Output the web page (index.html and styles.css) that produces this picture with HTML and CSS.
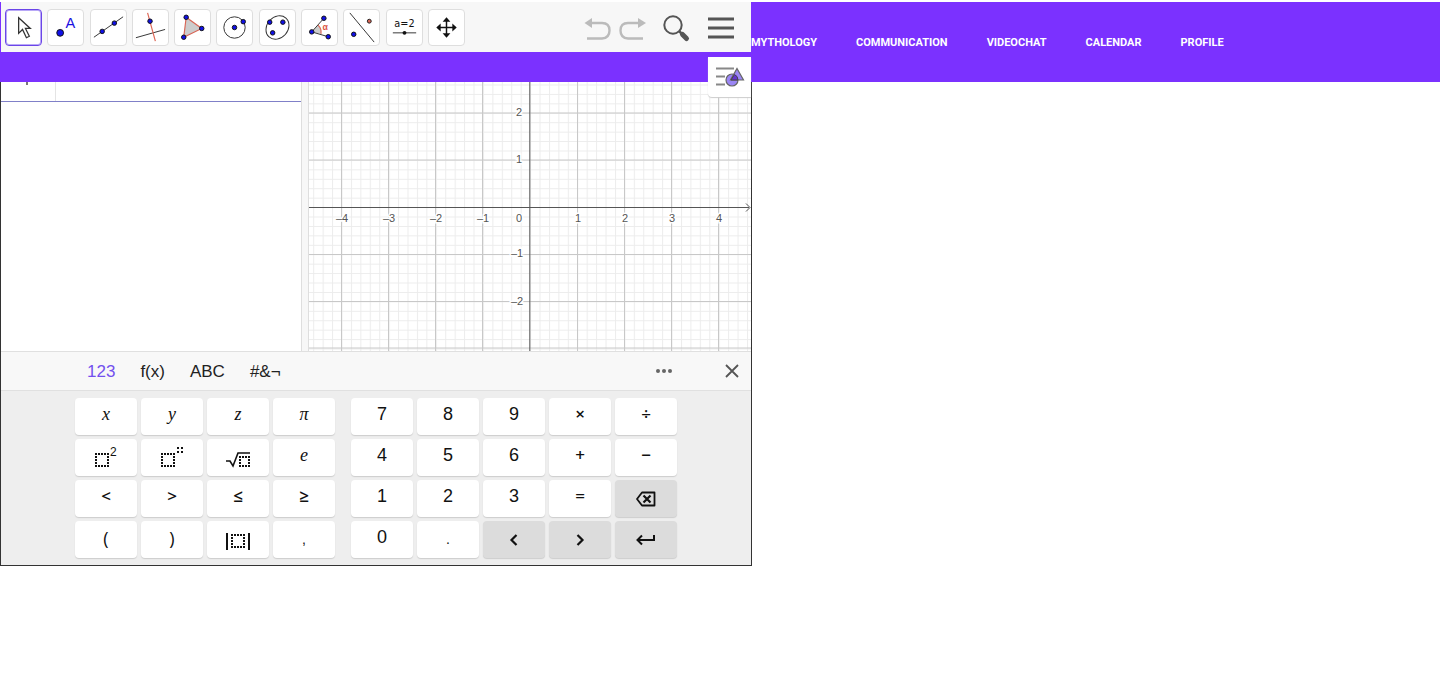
FILE: index.html
```html
<!DOCTYPE html>
<html lang="en">
<head>
<meta charset="utf-8">
<title>Geometry</title>
<link rel="stylesheet" href="styles.css">
</head>
<body>
<div class="page">
  <header class="site-header">
    <nav class="site-nav" aria-label="Main">
      <a href="#mythology">MYTHOLOGY</a>
      <a href="#communication">COMMUNICATION</a>
      <a href="#videochat">VIDEOCHAT</a>
      <a href="#calendar">CALENDAR</a>
      <a href="#profile">PROFILE</a>
    </nav>
  </header>

  <div class="toolbar">
    <div class="tools">
      <button class="tool selected" aria-label="Move"><svg viewBox="0 0 36 36"><path d="M13 8v16l4-4 4 8.500 3-1.500-4-8h5z" fill="#fff" stroke="#333" stroke-width="1.300"/></svg></button>
      <button class="tool" aria-label="Point"><svg viewBox="0 0 36 36"><circle cx="12.500" cy="23.500" r="3.500" class="pt"/><text x="18" y="18" class="letter">A</text></svg></button>
      <button class="tool" aria-label="Line"><svg viewBox="0 0 36 36"><path d="M3 28 33 7" class="ln"/><circle cx="11.500" cy="22" r="2.300" class="pt"/><circle cx="24" cy="13.500" r="2.300" class="pt"/></svg></button>
      <button class="tool" aria-label="Perpendicular line"><svg viewBox="0 0 36 36"><path d="M3 28.500 33 20" class="ln"/><path d="M15 3l8 29" class="red"/><circle cx="17.500" cy="11.500" r="2.300" class="pt"/></svg></button>
      <button class="tool" aria-label="Polygon"><svg viewBox="0 0 36 36"><path d="M11.500 7.500 27.500 19 9 28z" fill="#ccc" stroke="#d86555" stroke-width="1.200"/><circle cx="11.500" cy="7.500" r="2.300" class="pt"/><circle cx="27.500" cy="19" r="2.300" class="pt"/><circle cx="9" cy="28" r="2.300" class="pt"/></svg></button>
      <button class="tool" aria-label="Circle"><svg viewBox="0 0 36 36"><circle cx="18" cy="18" r="11" class="ln"/><circle cx="18" cy="18" r="2.300" class="pt"/><circle cx="27" cy="12" r="2.300" class="pt"/></svg></button>
      <button class="tool" aria-label="Ellipse"><svg viewBox="0 0 36 36"><ellipse cx="18" cy="18" rx="13" ry="10.800" transform="rotate(-48 18 18)" class="ln"/><circle cx="10" cy="12.500" r="2.300" class="pt"/><circle cx="23.500" cy="12.500" r="2.300" class="pt"/><circle cx="13" cy="23.500" r="2.300" class="pt"/></svg></button>
      <button class="tool" aria-label="Angle"><svg viewBox="0 0 36 36"><path d="M10 22.500l6.500-7a10 10 0 0 1 3 9z" fill="#ccc"/><path d="M16.500 15.500a10 10 0 0 1 3 9" class="red"/><path d="M22.500 8.500 10 22.500l17 5" class="ln"/><circle cx="22.500" cy="8.500" r="2.300" class="pt"/><circle cx="10" cy="22.500" r="2.300" class="pt"/><circle cx="27" cy="27.500" r="2.300" class="pt"/><text x="21" y="21" class="alpha">α</text></svg></button>
      <button class="tool" aria-label="Reflect about line"><svg viewBox="0 0 36 36"><path d="M6 3l25 30" class="ln"/><circle cx="10" cy="25" r="2.300" class="pt"/><circle cx="26" cy="11.500" r="2" fill="#d86555" stroke="#222"/></svg></button>
      <button class="tool" aria-label="Slider"><svg viewBox="0 0 36 36"><text x="18" y="17" text-anchor="middle" class="slider-label">a=2</text><path d="M6 23.500h24" class="ln"/><circle cx="18" cy="23.500" r="2" fill="#111"/></svg></button>
      <button class="tool" aria-label="Move graphics view"><svg viewBox="0 0 36 36"><path d="M18 10v16M10 18h16" stroke="#111" stroke-width="1.500"/><path d="M18 7.500l-4 4.500h8zM18 28.500l-4-4.500h8zM7.500 18l4.500-4v8zM28.500 18l-4.500-4v8z" fill="#111"/></svg></button>
    </div>
    <div class="actions">
      <button class="action" aria-label="Undo"><svg width="28" height="36" viewBox="0 0 28 36"><path d="M5 14h14q7.500 0 7.500 7.500t-7.500 8H4" fill="none" stroke="#bbb" stroke-width="2.400"/><path d="M1.500 14 9 9v10z" fill="#bbb"/></svg></button>
      <button class="action" aria-label="Redo"><svg width="28" height="36" viewBox="0 0 28 36"><path d="M23 14H9q-7.500 0-7.500 7.500t7.500 8h15" fill="none" stroke="#bbb" stroke-width="2.400"/><path d="M27 14 19 9v10z" fill="#bbb"/></svg></button>
      <button class="action" aria-label="Search"><svg width="28" height="36" viewBox="0 0 28 36"><circle cx="10" cy="16" r="8.700" fill="none" stroke="#555" stroke-width="2"/><path d="M16 22l3 3" stroke="#555" stroke-width="2.500"/><path d="M19.500 25.500l4 4" stroke="#555" stroke-width="5" stroke-linecap="round"/></svg></button>
      <button class="action" aria-label="Menu"><svg width="28" height="36" viewBox="0 0 28 36"><path d="M1 10h26M1 19h26M1 28h26" stroke="#555" stroke-width="3"/></svg></button>
    </div>
  </div>

  <main class="applet">
    <div class="views">
      <div class="algebra">
        <div class="algebra-row"><div class="marker"></div></div>
      </div>
      <div class="splitter"></div>
      <div class="graphics">
        <svg width="442" height="269" viewBox="0 0 442 269" role="img" aria-label="Coordinate grid">
          <defs>
            <pattern id="minor" x="32.500" y="30.800" width="9.430" height="9.430" patternUnits="userSpaceOnUse"><path d="M0 .5h9.430M.5 0v9.430" stroke="#ececec" fill="none"/></pattern>
          </defs>
          <rect width="442" height="269" fill="#fff"/>
          <rect width="442" height="269" fill="url(#minor)"/>
          <path d="M32.500 0v269M79.500 0v269M126.500 0v269M173.500 0v269M268.500 0v269M315.500 0v269M362.500 0v269M409.500 0v269M0 31h442M0 78h442M0 172.500h442M0 219.500h442M0 266h442" class="major"/>
          <path d="M220.800 0v269M0 125.500h440" class="axis"/>
          <path d="M437 121.500l4 4-4 4" class="axis"/>
          <g class="ticks" text-anchor="middle">
            <text x="33" y="140">–4</text><text x="80" y="140">–3</text><text x="127" y="140">–2</text><text x="174" y="140">–1</text><text x="210" y="140">0</text><text x="269" y="140">1</text><text x="316" y="140">2</text><text x="363" y="140">3</text><text x="410" y="140">4</text>
            <text x="210" y="34">2</text><text x="210" y="81">1</text><text x="208" y="175">–1</text><text x="208" y="223">–2</text>
          </g>
        </svg>
        <button class="style-button" aria-label="Style bar"><svg width="32" height="24" viewBox="0 0 32 24"><path d="M2 3.500h18M2 11.500h9M2 19.500h9" stroke="#888" stroke-width="2"/><circle cx="18" cy="15" r="6" fill="#9b86f5" stroke="#666" stroke-width="1.200"/><path d="M23 3.500 29.500 15H16.500z" fill="#9b86f5" stroke="#666" stroke-width="1.200"/><path d="M17 15 20.500 9.500a6 6 0 0 1 3.500 5.500z" fill="#6535d0" stroke="#444"/></svg></button>
      </div>
    </div>

    <section class="keyboard" aria-label="Keyboard">
      <div class="keyboard-tabs">
        <button class="tab active">123</button>
        <button class="tab">f(x)</button>
        <button class="tab">ABC</button>
        <button class="tab">#&amp;¬</button>
        <button class="icon-button more" aria-label="More"><svg width="16" height="16" viewBox="0 0 16 16" fill="#666"><circle cx="2" cy="8" r="2"/><circle cx="8" cy="8" r="2"/><circle cx="14" cy="8" r="2"/></svg></button>
        <button class="icon-button" aria-label="Close"><svg width="16" height="16" viewBox="0 0 16 16"><path d="M2 2l12 12M14 2 2 14" stroke="#555" stroke-width="1.800"/></svg></button>
      </div>
      <div class="keys">
        <div class="pad letters">
          <button class="key var">x</button><button class="key var">y</button><button class="key var">z</button><button class="key var">π</button>
          <button class="key" aria-label="Square"><svg width="24" height="24" viewBox="0 0 24 24"><path d="M1 8h14M1 20h14M2 10v9M14 10v9" class="dots"/><text x="16" y="10" class="sup">2</text></svg></button>
          <button class="key" aria-label="Power"><svg width="24" height="24" viewBox="0 0 24 24"><path d="M1 8h14M1 20h14M2 10v9M14 10v9" class="dots"/><path d="M17 2h2M21 2h2M17 6h2M21 6h2" stroke="#111" stroke-width="2"/></svg></button>
          <button class="key" aria-label="Square root"><svg width="24" height="24" viewBox="0 0 24 24"><path d="M0 15h4l3 5L12 7h12" fill="none" stroke="#111" stroke-width="1.600"/><path d="M13 11h11M13 20h11M14 13v6M23 13v6" class="dots"/></svg></button>
          <button class="key var">e</button>
          <button class="key op">&lt;</button><button class="key op">&gt;</button><button class="key op">≤</button><button class="key op">≥</button>
          <button class="key paren">(</button><button class="key paren">)</button>
          <button class="key" aria-label="Absolute value"><svg width="24" height="24" viewBox="0 0 24 24"><path d="M1 5v17M23 5v17" stroke="#111" stroke-width="2"/><path d="M5 7h14M5 19h14M6 9v9M18 9v9" class="dots"/></svg></button>
          <button class="key comma">,</button>
        </div>
        <div class="pad digits">
          <button class="key">7</button><button class="key">8</button><button class="key">9</button><button class="key op">×</button><button class="key op">÷</button>
          <button class="key">4</button><button class="key">5</button><button class="key">6</button><button class="key op">+</button><button class="key op">−</button>
          <button class="key">1</button><button class="key">2</button><button class="key">3</button><button class="key op">=</button>
          <button class="key dark" aria-label="Backspace"><svg width="24" height="24" viewBox="0 0 24 24"><path d="M8 5.500h12.500v13H8L3 12z" fill="none" stroke="#111" stroke-width="1.800" stroke-linejoin="round"/><path d="M9.500 8.500l7 7M16.500 8.500l-7 7" stroke="#111" stroke-width="2.200"/></svg></button>
          <button class="key">0</button><button class="key comma">.</button>
          <button class="key dark" aria-label="Left"><svg width="24" height="24" viewBox="0 0 24 24"><path d="M14.500 7l-5 5 5 5" fill="none" stroke="#111" stroke-width="2.200"/></svg></button>
          <button class="key dark" aria-label="Right"><svg width="24" height="24" viewBox="0 0 24 24"><path d="M9.500 7l5 5-5 5" fill="none" stroke="#111" stroke-width="2.200"/></svg></button>
          <button class="key dark" aria-label="Enter"><svg width="24" height="24" viewBox="0 0 24 24"><path d="M20 7v5H3.500M8 7.500 3.500 12l4.500 4.500" fill="none" stroke="#111" stroke-width="2"/></svg></button>
        </div>
      </div>
    </section>
  </main>
</div>
</body>
</html>
```
FILE: styles.css
```css
* { box-sizing: border-box; }

body {
  margin: 0;
  padding-top: 2px;
  background: #fff;
  font-family: "Liberation Sans", Arial, sans-serif;
}

button {
  border: 0;
  padding: 0;
  background: none;
  font: inherit;
  color: inherit;
  cursor: pointer;
}

svg { display: block; flex: none; }

.page {
  display: grid;
  grid-template-columns: 752px 1fr;
  grid-template-rows: 80px auto;
}

.site-header {
  grid-area: 1 / 1 / 2 / 3;
  display: flex;
  align-items: center;
  padding-top: 2px;
  padding-left: 751px;
  background: #7b31ff;
}

.site-nav { display: flex; gap: 39px; }

.site-nav a {
  color: #fff;
  font: 700 11px/16px Roboto, sans-serif;
  text-decoration: none;
}

.toolbar {
  grid-area: 1 / 1;
  align-self: start;
  display: flex;
  justify-content: space-between;
  align-items: center;
  height: 50px;
  margin: 0 1px;
  padding: 0 16px 0 4px;
  background: #f7f7f7;
}

.tools {
  display: flex;
  justify-content: space-between;
  width: 460px;
}

.tool {
  width: 37px;
  height: 37px;
  border: 1px solid #dedede;
  border-radius: 4px;
  background: #fff;
}

.tool.selected { border: 1px solid #6b45e8; box-shadow: 0 0 0 1px #b9a9f7 inset; }
.tool svg { width: 100%; height: 100%; }
.pt { fill: #1010e8; stroke: #111; stroke-width: 1; }
.ln { fill: none; stroke: #333; stroke-width: 1; }
.red { fill: none; stroke: #dd6655; stroke-width: 1.2; }
.letter { font: 15px "Liberation Sans", sans-serif; fill: #1a0fe0; }
.alpha { font: 700 9px "Liberation Sans", sans-serif; fill: #dd5544; }
.slider-label { font: 10px "DejaVu Sans", sans-serif; fill: #111; }

.actions { display: flex; }
.action { width: 28px; height: 36px; }
.action + .action { margin-left: 8px; }
.action:nth-child(n + 3) { margin-left: 16px; }

.applet {
  grid-area: 2 / 1;
  border: 1px solid #333;
  border-top: 0;
}

.views { display: flex; height: 269px; }
.algebra { flex: 1; }

.algebra-row {
  height: 20px;
  padding-left: 25px;
  border-bottom: 1px solid #8080c8;
  background: linear-gradient(#e4e4e4, #e4e4e4) 54px 0 / 1px 100% no-repeat;
}

.marker { width: 2px; height: 3px; background: #777; }

.splitter {
  width: 8px;
  border: solid #dedede;
  border-width: 0 1px;
  background: #f7f7f7;
}

.graphics { position: relative; width: 442px; }
.major { stroke: #c8c8c8; fill: none; }
.axis { stroke: #555; fill: none; }

.ticks text {
  font: 11px "Liberation Sans", sans-serif;
  fill: #555;
  stroke: #fff;
  stroke-width: 3px;
  paint-order: stroke;
}

.style-button {
  position: absolute;
  top: -25px;
  right: 0;
  display: flex;
  justify-content: center;
  align-items: center;
  width: 43px;
  height: 40px;
  border-radius: 0 0 0 4px;
  background: #fff;
  box-shadow: 0 1px 1px #ccc;
}

.keyboard { background: #eee; }

.keyboard-tabs {
  display: flex;
  align-items: center;
  gap: 25px;
  height: 40px;
  padding: 0 11px 0 86px;
  border: solid #e0e0e0;
  border-width: 1px 0;
  background: #f8f8f8;
}

.tab { padding-top: 1px; font-size: 17px; line-height: 20px; color: #222; }
.tab.active { color: #7350ee; }
.icon-button { width: 16px; height: 16px; }
.more { margin-left: auto; margin-right: 27px; }

.keys {
  display: flex;
  justify-content: center;
  gap: 16px;
  padding: 7px 0;
}

.pad { display: grid; grid-auto-rows: 37px; gap: 4px; }
.letters { grid-template-columns: repeat(4, 62px); }
.digits { grid-template-columns: repeat(5, 62px); }

.key {
  display: flex;
  justify-content: center;
  align-items: center;
  padding-bottom: 5px;
  border-radius: 4px;
  background: #fff;
  box-shadow: 0 1px 1px #ccc;
  color: #111;
  font-size: 18px;
  line-height: 20px;
}

.key:has(svg) { padding-bottom: 0; }
.key.dark { background: #dcdcdc; }
.var { font-family: "Liberation Serif", serif; font-style: italic; padding-bottom: 5px; }
.op { font-family: "Open Sans", sans-serif; font-size: 17px; font-weight: 600; }
.paren { font-family: "Open Sans", sans-serif; padding-bottom: 4px; }
.comma { font-size: 14px; padding-bottom: 1px; }
.dots { fill: none; stroke: #111; stroke-width: 2; stroke-dasharray: 2 1; }
.sup { font: 12px "Liberation Sans", sans-serif; fill: #111; }
```
